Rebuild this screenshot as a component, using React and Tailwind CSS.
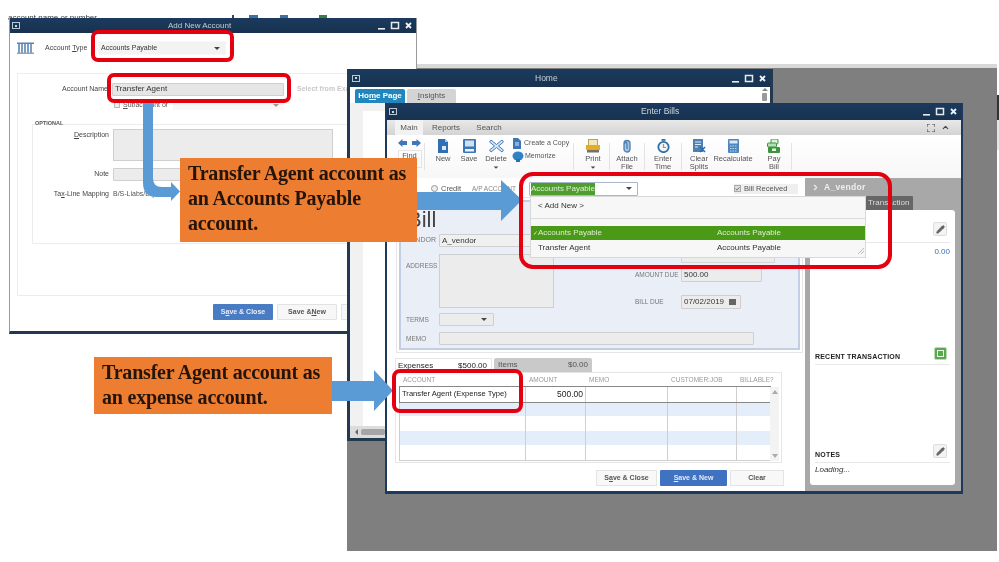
import { Check, ChevronRight, ChevronUp, Pencil } from 'lucide-react'

const navy = 'bg-gradient-to-b from-[#1b3a5e] to-[#18324f]'

function WinControls() {
  return (
    <svg width="36" height="9" viewBox="0 0 36 9" className="ml-auto mr-[3px] shrink-0">
      <rect x="1" y="7" width="7" height="1.6" fill="#e6ebf0" />
      <rect x="14.5" y="1.5" width="7" height="6" fill="none" stroke="#e6ebf0" strokeWidth="1.5" />
      <path d="M29 2l5 5M34 2l-5 5" stroke="#eef2f5" strokeWidth="1.8" />
    </svg>
  )
}

function SysIcon() {
  return (
    <span className="ml-[2px] flex h-[7px] w-[8px] shrink-0 items-center justify-center border border-[#b9c6d4]">
      <span className="h-[2px] w-[2px] bg-[#c9d4df]" />
    </span>
  )
}

function Caret({ className = '' }) {
  return <span className={`h-0 w-0 border-x-[3px] border-t-[3px] border-x-transparent border-t-[#444] ${className}`} />
}

function OrangeNote({ className, lines }) {
  return (
    <div className={`absolute z-40 bg-[#ed7d31] pl-[8px] font-['Liberation_Serif',serif] text-[20px] font-bold leading-[25px] tracking-[-0.2px] text-[#24140a] ${className}`}>
      {lines.map((l) => (
        <div key={l} className="whitespace-nowrap">{l}</div>
      ))}
    </div>
  )
}

function RedBox({ className }) {
  return <div className={`absolute z-50 border-[4px] border-[#e5000f] ${className}`} />
}

function Field({ className = '', children }) {
  return (
    <div className={`flex items-center rounded-[1px] border border-[#cfcfcf] bg-[#ececec] px-[2px] text-[8px] text-[#333] ${className}`}>
      {children}
    </div>
  )
}

function AddNewAccount() {
  return (
    <div className="absolute left-[9px] top-[18px] z-10 flex h-[316px] w-[408px] flex-col border-x border-b-[3px] border-x-[#9a9a9a] border-b-[#22384f] bg-white">
      <div className={`flex h-[15px] shrink-0 items-center ${navy}`}>
        <SysIcon />
        <span className="ml-[148px] text-[8px] text-[#c4ccd4]">Add New Account</span>
        <WinControls />
      </div>
      <div className="flex h-[27px] shrink-0 items-center pl-[7px] pt-[3px]">
        <svg width="17" height="12" viewBox="0 0 17 12">
          <rect x="0" y="0.5" width="17" height="1.5" fill="#5d86ad" />
          <path d="M2 2v9M5 2v9M8 2v9M11 2v9M14 2v9" stroke="#5d86ad" strokeWidth="1.6" />
          <rect x="0" y="10.5" width="17" height="1.5" fill="#8aa6c1" />
        </svg>
        <span className="ml-[11px] w-[41px] whitespace-nowrap text-[7px] text-[#444]">Account <u>T</u>ype</span>
        <div className="ml-[13px] flex h-[12px] w-[126px] items-center rounded-[1px] bg-[#f3f3f3] pl-[2px] text-[7px] text-[#333] shadow-[0_0_1px_#aaa]">
          Accounts Payable
          <Caret className="ml-auto mr-[5px]" />
        </div>
      </div>
      <div className="ml-[7px] mt-[13px] h-[223px] w-[410px] shrink-0 border border-[#ededed] pt-[8px]">
        <div className="flex h-[14px] items-center">
          <span className="w-[90px] text-right text-[7px] text-[#444]">Account Name</span>
          <Field className="ml-[4px] h-[13px] w-[172px] !bg-[#e6e6e6] text-[7px]">Transfer Agent</Field>
          <span className="ml-[13px] whitespace-nowrap text-[7px] font-bold text-[#c8c8c8]">Select from Exa</span>
        </div>
        <div className="mt-[3px] flex h-[12px] items-center pl-[96px]">
          <span className="h-[6px] w-[6px] border border-[#bbb] bg-[#eee]" />
          <span className="ml-[3px] text-[7px] text-[#555]"><u>S</u>ubaccount of</span>
          <div className="ml-[5px] flex h-[10px] w-[111px] items-center bg-[#f7f7f7]">
            <Caret className="ml-auto mr-[5px] !border-t-[#999]" />
          </div>
        </div>
        <div className="relative ml-[14px] mt-[13px] h-[120px] w-[396px] border border-[#ececec]">
          <span className="absolute -top-[5px] left-[2px] bg-white text-[5.5px] font-bold leading-[7px] text-[#555]">OPTIONAL</span>
          <div className="mt-[4px] flex">
            <span className="mt-[1px] w-[76px] text-right text-[7px] text-[#444]"><u>D</u>escription</span>
            <div className="ml-[4px] h-[32px] w-[220px] border border-[#cfcfcf] bg-[#ececec]" />
          </div>
          <div className="mt-[7px] flex h-[13px] items-center">
            <span className="w-[76px] text-right text-[7px] text-[#444]">Note</span>
            <Field className="ml-[4px] h-[13px] w-[220px]" />
          </div>
          <div className="mt-[7px] flex h-[13px] items-center">
            <span className="w-[76px] whitespace-nowrap text-right text-[7px] text-[#444]">Ta<u>x</u>-Line Mapping</span>
            <div className="ml-[4px] whitespace-nowrap text-[7px] text-[#555]">B/S-Liabs/Eq.:Acco</div>
          </div>
        </div>
      </div>
      <div className="ml-[203px] mt-[8px] flex gap-[4px]">
        <div className="flex h-[16px] w-[60px] items-center justify-center rounded-[1px] bg-[#4a7cc4] text-[7px] font-bold text-[#e8eef8]">S<u>a</u>ve &amp; Close</div>
        <div className="flex h-[16px] w-[60px] items-center justify-center rounded-[1px] border border-[#e2e2e2] bg-[#f7f7f7] text-[7px] font-bold text-[#555]">Save &amp; <u>N</u>ew</div>
        <div className="h-[16px] w-[60px] border border-[#e2e2e2] bg-[#f7f7f7]" />
      </div>
    </div>
  )
}

function HomeWindow() {
  return (
    <div className="absolute left-[347px] top-[69px] z-20 flex h-[372px] w-[426px] flex-col border-x-[3px] border-b-[3px] border-[#23394f] bg-[#f1f1f1]">
      <div className={`flex h-[18px] shrink-0 items-center ${navy}`}>
        <SysIcon />
        <span className="ml-[175px] text-[8.5px] text-[#c8d0d8]">Home</span>
        <WinControls />
      </div>
      <div className="flex h-[16px] shrink-0 items-end bg-white pl-[5px]">
        <div className="flex h-[14px] w-[50px] items-center justify-center rounded-t-[2px] bg-[#1f87bd] text-[8px] font-bold text-white">Ho<u>m</u>e Page</div>
        <div className="ml-[2px] flex h-[14px] w-[49px] items-center justify-center rounded-t-[2px] bg-[#d4d4d4] text-[8px] text-[#555]"><u>I</u>nsights</div>
        <div className="ml-auto mr-[2px] flex h-[16px] w-[7px] flex-col items-center gap-[2px] pt-[1px]">
          <span className="h-0 w-0 border-x-[3px] border-b-[3px] border-x-transparent border-b-[#888]" />
          <span className="h-[8px] w-[5px] rounded-[1px] bg-[#999]" />
        </div>
      </div>
      <div className="flex min-h-0 flex-1 pl-[13px] pt-[8px]">
        <div className="h-full w-[30px] bg-white" />
      </div>
      <div className="flex h-[12px] shrink-0 items-center bg-[#dcdcdc] pl-[5px]">
        <span className="h-0 w-0 border-y-[3px] border-r-[3px] border-y-transparent border-r-[#666]" />
        <span className="ml-[3px] h-[6px] w-[24px] rounded-[2px] bg-[#a5a5a5]" />
      </div>
    </div>
  )
}

const ribbonTabs = ['Main', 'Reports', 'Search']

function RibbonIcon({ name }) {
  if (name === 'new')
    return (
      <svg width="12" height="14" viewBox="0 0 12 14">
        <path d="M1 0h7l3 3v11H1z" fill="#2f6fb7" />
        <path d="M8 0l3 3H8z" fill="#a8c8e8" />
        <rect x="5" y="7" width="4" height="4" fill="#dce9f6" />
      </svg>
    )
  if (name === 'save')
    return (
      <svg width="13" height="14" viewBox="0 0 13 14">
        <rect width="13" height="14" rx="1" fill="#3a76b8" />
        <rect x="2" y="1.5" width="9" height="6" fill="#cfe0f1" />
        <rect x="2" y="10" width="9" height="2.5" fill="#ecf3fa" />
      </svg>
    )
  if (name === 'delete')
    return (
      <svg width="15" height="14" viewBox="0 0 15 14">
        <path d="M2 1l5.5 4.5L13 1l1.5 2L9.5 7l5 4-1.5 2-5.5-4.5L2 13 .5 11l5-4-5-4z" fill="#d6e6f5" stroke="#3f7fc0" />
      </svg>
    )
  if (name === 'print')
    return (
      <svg width="14" height="14" viewBox="0 0 14 14">
        <rect x="2.5" y="0.5" width="9" height="6" fill="#f5e7b8" stroke="#b9a15a" />
        <rect x="0" y="6" width="14" height="5" fill="#e0ad24" />
        <rect x="1" y="11" width="12" height="2.5" fill="#75706a" />
      </svg>
    )
  if (name === 'attach')
    return (
      <svg width="10" height="14" viewBox="0 0 10 14">
        <path d="M2 4.5a3 3 0 0 1 6 0v5.5a3 3 0 0 1-6 0V5a1.5 1.5 0 0 1 3 0v5" fill="#a9c4df" stroke="#4b7fb2" strokeWidth="1.3" />
      </svg>
    )
  if (name === 'time')
    return (
      <svg width="13" height="14" viewBox="0 0 13 14">
        <rect x="4.5" y="0" width="4" height="1.8" fill="#2f6fa7" />
        <circle cx="6.5" cy="8" r="5.2" fill="#f0f5fa" stroke="#2f6fa7" strokeWidth="1.8" />
        <path d="M6.5 5v3.5h2.5" stroke="#d98a1f" strokeWidth="1.2" fill="none" />
      </svg>
    )
  if (name === 'clear')
    return (
      <svg width="14" height="14" viewBox="0 0 14 14">
        <rect x="1" y="0" width="10" height="13" fill="#4f80b5" />
        <path d="M3 3h6M3 5.5h6M3 8h3" stroke="#dfeaf5" />
        <path d="M8 8l5 5M13 8l-5 5" stroke="#2d6bb0" strokeWidth="1.6" />
      </svg>
    )
  if (name === 'calc')
    return (
      <svg width="11" height="14" viewBox="0 0 11 14">
        <rect width="11" height="14" rx="1" fill="#4e87bf" />
        <rect x="1.5" y="1.5" width="8" height="3" fill="#dce9f5" />
        <path d="M2 7h7M2 9.5h7M2 12h7" stroke="#bdd5ea" strokeDasharray="1.5 1" />
      </svg>
    )
  return (
    <svg width="14" height="14" viewBox="0 0 14 14">
      <rect x="4" y="0" width="7" height="5" rx="1" fill="#dcefd8" stroke="#3c9440" />
      <rect x="0.5" y="4" width="9" height="4" rx="1" fill="#b8dfb2" stroke="#3c9440" />
      <rect x="1" y="8" width="12" height="6" rx="1" fill="#3c9440" />
      <rect x="5" y="9.5" width="4" height="2.5" fill="#e5f3e2" />
    </svg>
  )
}

function RibbonButton({ icon, label, w, menu }) {
  return (
    <div className={`flex shrink-0 flex-col items-center pt-[2px] text-[7.5px] leading-[8px] text-[#555] ${w}`}>
      <div className="flex h-[14px] items-center justify-center"><RibbonIcon name={icon} /></div>
      <div className="mt-[2px] whitespace-pre text-center">{label}</div>
      {menu && <Caret className="mt-[3px] scale-75" />}
    </div>
  )
}

function Sep({ className = '' }) {
  return <span className={`mt-[6px] h-[27px] w-px shrink-0 bg-[#e3e3e3] ${className}`} />
}

function Ribbon() {
  return (
    <div className="flex h-[43px] shrink-0 items-start bg-gradient-to-b from-white to-[#f7f7f7] pt-[2px] pl-[9px]">
      <div className="flex w-[27px] shrink-0 flex-col items-center">
        <div className="mt-[2px] flex gap-[5px]">
          <span className="h-[8px] w-[9px] bg-[#3f78b5] [clip-path:polygon(0_50%,50%_0,50%_25%,100%_25%,100%_75%,50%_75%,50%_100%)]" />
          <span className="h-[8px] w-[9px] bg-[#3f78b5] [clip-path:polygon(100%_50%,50%_0,50%_25%,0_25%,0_75%,50%_75%,50%_100%)]" />
        </div>
        <div className="mt-[3px] flex h-[18px] w-[24px] justify-center border border-[#e4e4e4] text-[7.5px] leading-[10px] text-[#555]">Find</div>
      </div>
      <Sep className="ml-[1px]" />
      <RibbonButton icon="new" label="New" w="ml-[5px] w-[26px]" />
      <RibbonButton icon="save" label="Save" w="w-[26px]" />
      <RibbonButton icon="delete" label="Delete" w="w-[28px]" menu />
      <div className="ml-[2px] w-[61px] shrink-0 whitespace-nowrap text-[7px] text-[#555]">
        <div className="flex h-[12px] items-center gap-[2px]">
          <svg width="10" height="11" viewBox="0 0 10 11"><path d="M1 0h5l3 3v8H1z" fill="#3a76b8" /><path d="M3 5h4M3 7h4" stroke="#dce9f6" /></svg>
          Create a Copy
        </div>
        <div className="mt-[1px] flex h-[12px] items-center gap-[1px]">
          <svg width="12" height="11" viewBox="0 0 12 11"><ellipse cx="6" cy="5" rx="5.5" ry="4.5" fill="#2f82c5" /><rect x="4" y="8" width="4" height="3" fill="#2f6fa7" /></svg>
          Memorize
        </div>
      </div>
      <Sep />
      <RibbonButton icon="print" label="Print" w="w-[35px] pl-[3px]" menu />
      <Sep />
      <RibbonButton icon="attach" label={'Attach\nFile'} w="w-[34px]" />
      <Sep />
      <RibbonButton icon="time" label={'Enter\nTime'} w="w-[36px]" />
      <Sep />
      <RibbonButton icon="clear" label={'Clear\nSplits'} w="w-[34px]" />
      <RibbonButton icon="calc" label="Recalculate" w="w-[34px]" />
      <Sep className="ml-[7px] !bg-transparent" />
      <RibbonButton icon="pay" label={'Pay\nBill'} w="ml-[1px] w-[30px]" />
      <Sep className="ml-[2px]" />
    </div>
  )
}

function BillForm() {
  return (
    <div className="ml-[9px] mt-[1px] h-[156px] w-[407px] shrink-0 border border-[#e6e6e6] p-[2px]">
      <div className="h-full border-2 border-[#c3cde3] bg-[#eaeff7] pl-[5px]">
        <div className="h-[32px] pl-[1px] text-[22px] leading-[36px] text-[#444]">Bill</div>
        <div className="flex h-[13px] items-center">
          <span className="w-[33px] text-[7px] text-[#777]">VENDOR</span>
          <Field className="h-[13px] w-[115px] !bg-[#f0f0f0]">A_vendor</Field>
        </div>
        <div className="mt-[7px] flex">
          <span className="w-[33px] pt-[7px] text-[6.5px] text-[#777]">ADDRESS</span>
          <div className="h-[54px] w-[115px] border border-[#cfcfcf] bg-[#ececec]" />
          <div className="-mt-[4px] ml-[81px]">
            <div className="ml-[46px] h-[13px] w-[94px] border border-[#d5d5d5] bg-[#ececec]" />
            <div className="mt-[5px] flex h-[14px] items-center">
              <span className="w-[46px] whitespace-nowrap text-[6.5px] text-[#777]">AMOUNT DUE</span>
              <Field className="h-[14px] w-[81px] text-[8.5px]">500.00</Field>
            </div>
            <div className="mt-[13px] flex h-[14px] items-center">
              <span className="w-[46px] text-[6.5px] text-[#777]">BILL DUE</span>
              <Field className="h-[14px] w-[60px] text-[8.5px]">
                07/02/2019
                <span className="ml-auto mr-[2px] h-[6px] w-[7px] bg-[#666]" />
              </Field>
            </div>
          </div>
        </div>
        <div className="mt-[4px] flex h-[13px] items-center">
          <span className="w-[33px] text-[6.5px] text-[#777]">TERMS</span>
          <Field className="h-[13px] w-[55px]"><Caret className="ml-auto mr-[4px]" /></Field>
        </div>
        <div className="mt-[6px] flex h-[13px] items-center">
          <span className="w-[33px] text-[6.5px] text-[#777]">MEMO</span>
          <Field className="h-[13px] w-[315px]" />
        </div>
      </div>
    </div>
  )
}

const colWidths = 'grid-cols-[126px_60px_82px_69px_33px]'

function ExpenseTable() {
  const rows = [
    ['Transfer Agent (Expense Type)', '500.00'],
    ['', ''],
    ['', ''],
    ['', ''],
    ['', ''],
  ]
  return (
    <div className="ml-[8px] mt-[5px] shrink-0">
      <div className="flex h-[14px] text-[8px]">
        <div className="flex w-[97px] items-center justify-between border-x border-t border-[#e6e6e6] bg-white pl-[2px] pr-[4px] text-[#222]">
          <span>Expenses</span><span>$500.00</span>
        </div>
        <div className="ml-[2px] flex w-[98px] items-center justify-between rounded-t-[2px] bg-[#c9c9c9] px-[4px] text-[#555]">
          <span>Items</span><span>$0.00</span>
        </div>
      </div>
      <div className="h-[91px] w-[387px] border border-[#e6e6e6] pl-[3px]">
        <div className={`grid h-[14px] items-center text-[6.5px] text-[#9a9a9a] ${colWidths}`}>
          <span className="pl-[4px]">ACCOUNT</span>
          <span className="pl-[4px]">AMOUNT</span>
          <span className="pl-[4px]">MEMO</span>
          <span className="pl-[4px]">CUSTOMER:JOB</span>
          <span className="pl-[4px]">BILLABLE?</span>
        </div>
        <div className="flex">
          <div className="w-[371px] border-b border-l border-[#cfcfcf]">
            {rows.map(([a, b], i) => (
              <div
                key={i}
                className={`grid h-[14.5px] text-[#222] ${colWidths} ${i === 0 ? 'outline outline-1 outline-[#888]' : ''} ${i % 2 === 1 ? 'bg-[#e3eefa]' : 'bg-white'}`}
              >
                <span className="whitespace-nowrap border-r border-[#cfcfcf] pl-[2px] text-[7.6px] leading-[14px]">{a}</span>
                <span className="border-r border-[#cfcfcf] pr-[2px] text-right text-[8.5px] leading-[14px]">{b}</span>
                <span className="border-r border-[#cfcfcf]" />
                <span className="border-r border-[#cfcfcf]" />
                <span />
              </div>
            ))}
          </div>
          <div className="flex w-[9px] flex-col items-center justify-between bg-[#f3f3f3] py-[3px]">
            <span className="h-0 w-0 border-x-[3px] border-b-[4px] border-x-transparent border-b-[#aaa]" />
            <span className="h-0 w-0 border-x-[3px] border-t-[4px] border-x-transparent border-t-[#aaa]" />
          </div>
        </div>
      </div>
    </div>
  )
}

function VendorPanel() {
  return (
    <div className="flex flex-1 flex-col bg-[#a8a8a8]">
      <div className="flex h-[18px] shrink-0 items-center pl-[6px] text-[8.5px] font-bold text-[#eee]">
        <ChevronRight size={9} strokeWidth={3} />
        <span className="ml-[4px] tracking-[0.3px]">A_vendor</span>
      </div>
      <div className="ml-[61px] h-[14px] w-[47px] shrink-0 rounded-t-[1px] bg-[#666] pl-[2px] text-[8px] leading-[14px] text-[#ddd]">Transaction</div>
      <div className="ml-[5px] flex h-[275px] w-[145px] shrink-0 flex-col rounded-[3px] bg-white px-[5px] text-[7px]">
        <div className="mt-[12px] flex justify-end border-b border-[#e8e8e8] pb-[6px] pr-[3px]">
          <span className="flex h-[14px] w-[14px] items-center justify-center rounded-[2px] border border-[#ddd] bg-[#f3f3f3]">
            <Pencil size={9} fill="#666" stroke="#555" />
          </span>
        </div>
        <div className="mt-[3px] text-right text-[8px] text-[#3b6fb0]">0.00</div>
        <div className="mt-[91px] flex h-[16px] items-end border-b border-[#e8e8e8] pb-[2px] font-bold tracking-[0.2px] text-[#222]">
          RECENT TRANSACTION
          <span className="ml-auto mb-[2px] mr-[3px] h-[13px] w-[13px] rounded-[2px] border border-[#bcdcb6] bg-[#5aa84f] p-[2px]">
            <span className="block h-full w-full border border-[#eaf5e8]" />
          </span>
        </div>
        <div className="mt-[81px] flex h-[17px] items-end border-b border-[#e8e8e8] pb-[2px] font-bold tracking-[0.2px] text-[#222]">
          NOTES
          <span className="ml-auto mr-[3px] mb-[2px] flex h-[14px] w-[14px] items-center justify-center rounded-[2px] border border-[#ddd] bg-[#f3f3f3]">
            <Pencil size={9} fill="#666" stroke="#555" />
          </span>
        </div>
        <div className="mt-[1px] text-[8px] italic text-[#333]">Loading...</div>
      </div>
    </div>
  )
}

function EnterBills() {
  return (
    <div className="absolute left-[385px] top-[103px] z-30 flex h-[391px] w-[578px] flex-col border-x-[2px] border-b-[3px] border-x-[#1d3a5c] border-b-[#1d3a5c] bg-white">
      <div className={`flex h-[17px] shrink-0 items-center ${navy}`}>
        <SysIcon />
        <span className="ml-[244px] text-[8.5px] text-[#ccd4dc]">Enter Bills</span>
        <WinControls />
      </div>
      <div className="flex h-[15px] shrink-0 items-center bg-gradient-to-b from-[#e9e9e9] to-[#d3d3d3] pl-[8px] text-[8px] text-[#555]">
        {ribbonTabs.map((t, i) => (
          <span key={t} className={`flex h-full items-center justify-center ${i === 0 ? 'w-[28px] bg-[#f2f2f2]' : 'ml-[3px] w-[40px]'}`}>{t}</span>
        ))}
        <span className="ml-auto mr-[11px] flex items-center gap-[6px] text-[#444]">
          <svg width="8" height="8" viewBox="0 0 8 8"><path d="M0 3V0h3M5 0h3v3M8 5v3H5M3 8H0V5" fill="none" stroke="#444" /></svg>
          <ChevronUp size={9} strokeWidth={3} />
        </span>
      </div>
      <Ribbon />
      <div className="flex min-h-0 flex-1">
        <div className="flex w-[418px] shrink-0 flex-col">
          <div className="flex h-[18px] shrink-0 items-center pl-[44px] pt-[3px] text-[7.5px] text-[#555]">
            <span className="h-[7px] w-[7px] rounded-full border border-[#999] bg-[#eee]" />
            <span className="ml-[3px]">Credit</span>
            <span className="ml-[11px] whitespace-nowrap text-[6.5px] text-[#888]">A/P ACCOUNT</span>
            <div className="ml-[13px] flex h-[14px] w-[109px] items-center rounded-[1px] border border-[#a8b8cc] pl-[1px]">
              <span className="bg-[#4f9d2f] text-[8px] text-[#dff0d4]">Accounts Payable</span>
              <Caret className="ml-auto mr-[5px]" />
            </div>
            <div className="ml-[96px] flex h-[10px] w-[64px] items-center bg-[#efefef]">
              <span className="flex h-[7px] w-[7px] items-center justify-center border border-[#aaa] bg-[#ddd]">
                <Check size={6} strokeWidth={4} />
              </span>
              <span className="ml-[3px] whitespace-nowrap">Bill Received</span>
            </div>
          </div>
          <BillForm />
          <ExpenseTable />
          <div className="ml-[209px] mt-[7px] flex gap-[3px] text-[7px] font-bold">
            <div className="flex h-[16px] w-[61px] items-center justify-center border border-[#e4e4e4] bg-[#f8f8f8] text-[#555]">S<u>a</u>ve &amp; Close</div>
            <div className="flex h-[16px] w-[67px] items-center justify-center rounded-[1px] bg-[#3f72c0] text-[#e4ecf8]"><u>S</u>ave &amp; New</div>
            <div className="flex h-[16px] w-[54px] items-center justify-center border border-[#e4e4e4] bg-[#f8f8f8] text-[#555]">Clear</div>
          </div>
        </div>
        <VendorPanel />
      </div>
    </div>
  )
}

function AccountDropdown() {
  return (
    <div className="absolute left-[530px] top-[196px] z-[35] flex h-[62px] w-[336px] flex-col border border-[#d8d8d8] bg-[#f7f7f7] text-[8px] text-[#333]">
      <div className="flex h-[22px] shrink-0 items-center border-b border-[#dcdcdc] pb-[3px] pl-[7px] text-[#333]">&lt; Add New &gt;</div>
      <div className="mt-[7px] flex h-[14px] shrink-0 items-center bg-[#4a9a17] pl-[2px] text-[#dcedd0]">
        <span className="w-[5px] text-[6px]">✓</span>
        <span className="w-[179px]">Accounts Payable</span>
        <span>Accounts Payable</span>
      </div>
      <div className="flex h-[15px] shrink-0 items-center pl-[7px]">
        <span className="w-[179px]">Transfer Agent</span>
        <span>Accounts Payable</span>
        <svg width="6" height="6" viewBox="0 0 6 6" className="ml-auto mr-[1px] mt-[7px]">
          <path d="M0 6l6-6M3 6l3-3" stroke="#bbb" />
        </svg>
      </div>
    </div>
  )
}

function Arrows() {
  return (
    <>
      <svg className="absolute left-[140px] top-[100px] z-[45]" width="42" height="102" viewBox="0 0 42 102">
        <path d="M3 0h10v78q0 9 9 9h9v-5l9 9.5-9 9.5v-4H17q-14 0-14-14z" fill="#5b9bd5" />
      </svg>
      <svg className="absolute left-[417px] top-[180px] z-[45]" width="105" height="42" viewBox="0 0 105 42">
        <path d="M0 12h84V0l21 20-21 21V30H0z" fill="#5b9bd5" />
      </svg>
      <svg className="absolute left-[332px] top-[370px] z-[45]" width="61" height="42" viewBox="0 0 61 42">
        <path d="M0 11h42V0l19 20.5L42 41V31H0z" fill="#5b9bd5" />
      </svg>
    </>
  )
}

export default function App() {
  return (
    <div className="relative h-[562px] w-[999px] overflow-hidden bg-white font-['Liberation_Sans',sans-serif] blur-[0.3px]">
      {/* bits of the window behind the dialog */}
      <div className="absolute left-[8px] top-[12px] text-[8px] text-[#333]">account name or number</div>
      <div className="absolute left-[232px] top-[15px] flex h-[3px] items-start">
        <span className="h-[3px] w-[2px] bg-[#444]" />
        <span className="ml-[15px] h-[3px] w-[9px] bg-[#3f6fa8]" />
        <span className="ml-[22px] h-[3px] w-[8px] bg-[#3f6fa8]" />
        <span className="ml-[31px] h-[3px] w-[8px] bg-[#3f7d3f]" />
      </div>
      <AddNewAccount />
      <div className="absolute left-[347px] top-[64px] h-[487px] w-[650px] border-t-[4px] border-[#d8d8d8] bg-[#7f7f7f]" />
      <div className="absolute left-[997px] top-[95px] h-[25px] w-[2px] bg-[#333]" />
      <div className="absolute left-[997px] top-[120px] h-[30px] w-[2px] bg-[#e5e5e5]" />
      <HomeWindow />
      <EnterBills />
      <AccountDropdown />
      <Arrows />
      <OrangeNote className="left-[180px] top-[158px] h-[84px] w-[237px] pt-[3px]" lines={['Transfer Agent account as', 'an Accounts Payable', 'account.']} />
      <OrangeNote className="left-[94px] top-[357px] h-[57px] w-[238px] pt-[3px]" lines={['Transfer Agent account as', 'an expense account.']} />
      <RedBox className="left-[91px] top-[30px] h-[32px] w-[143px] rounded-[7px]" />
      <RedBox className="left-[107px] top-[73px] h-[30px] w-[184px] rounded-[7px]" />
      <RedBox className="left-[519px] top-[172px] h-[97px] w-[373px] rounded-[14px]" />
      <RedBox className="left-[392px] top-[369px] h-[44px] w-[131px] rounded-[8px]" />
    </div>
  )
}
